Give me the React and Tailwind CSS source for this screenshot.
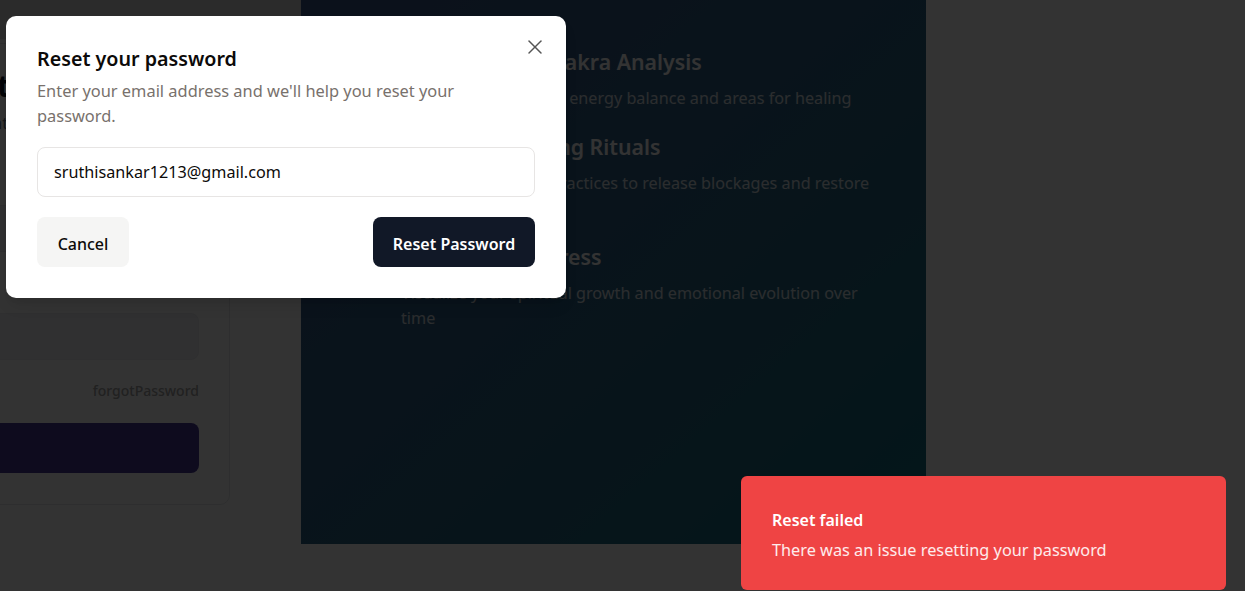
import React from "react";
import { X } from "lucide-react";

const features = [
  {
    lead: "Customized Ch",
    leadClass: "tracking-[0.7px]",
    rest: "akra Analysis",
    desc: "Discover your current energy balance and areas for healing",
  },
  {
    lead: "Personal Heali",
    leadClass: "tracking-[0.5px]",
    rest: "ng Rituals",
    desc: "Learn personalized practices to release blockages and restore balance",
  },
  {
    lead: "Track Your Prog",
    leadClass: "tracking-[-0.3px]",
    rest: "ress",
    desc: "Visualize your spiritual growth and emotional evolution over time",
  },
];

export default function App() {
  return (
    <div className="relative w-full h-[591px] overflow-hidden bg-white font-['Noto_Sans',sans-serif]">
      {/* underlying page */}
      <div className="flex h-[544px]">
        {/* left login column */}
        <div className="w-[301px] shrink-0 overflow-hidden bg-white flex flex-col">
          <div className="h-[40px] shrink-0 bg-[#d8d8d8] border-b border-[#f0f0f0]" />
          <div className="ml-[-554px] w-[784px] mt-[3px] rounded-[10px] border border-[#e5e7eb] bg-white px-[30px] pt-[24px] pb-[31px] flex flex-col">
            <h1 className="text-center text-[30px] leading-[36px] font-bold text-[#111827]">
              Sign in to your account
            </h1>
            <p className="text-center text-[16px] leading-[24px] mt-[7px] text-[#6b7280]">
              Enter your credentials to access your account
            </p>
            <div className="mt-[70px] h-[47px] rounded-[8px] bg-[#eef0f5] border border-[#e5e7eb]" />
            <div className="mt-[61px] h-[47px] rounded-[8px] bg-[#eef0f5] border border-[#e8eaef]" />
            <div className="mt-[21px] flex justify-end">
              <span className="text-[14px] leading-[20px] font-medium text-[#a3a3a3]">forgotPassword</span>
            </div>
            <div className="mt-[22px] h-[50px] rounded-[8px] bg-[#463796]" />
          </div>
        </div>

        {/* middle feature panel */}
        <div className="w-[625px] shrink-0 bg-gradient-to-br from-[#3a5589] to-[#0d6f80] pl-[100px] pt-[48px]">
          <div className="w-[480px] flex flex-col gap-[22px]">
            {features.map((f) => (
              <div key={f.rest}>
                <h3 className="text-[21.3px] leading-[28px] font-semibold text-white">
                  <span className={f.leadClass}>{f.lead}</span>
                  {f.rest}
                </h3>
                <p className="mt-[10px] text-[16.2px] leading-[25px] text-white/80">{f.desc}</p>
              </div>
            ))}
          </div>
        </div>

        {/* right area */}
        <div className="flex-1 bg-white" />
      </div>

      {/* overlay */}
      <div className="absolute inset-0 bg-black/80" />

      {/* dialog */}
      <div className="absolute left-[6px] top-[16px] w-[560px] rounded-[10px] bg-white px-[31px] pt-[29px] pb-[31px] shadow-lg">
        <h2 className="text-[19.7px] leading-[28px] font-semibold text-[#0c0a09]">Reset your password</h2>
        <p className="mt-[5px] text-[16.4px] leading-[25px] text-[#78716c]">
          Enter your email address and we'll help you reset your
          <br />
          password.
        </p>
        <div className="mt-[19px] h-[50px] rounded-[8px] border border-[#e7e5e4] bg-white flex items-center px-[16px] pt-[1px]">
          <span className="text-[16.2px] text-[#0c0a09]">sruthisankar1213@gmail.com</span>
        </div>
        <div className="mt-[20px] flex justify-between">
          <button className="w-[92px] h-[50px] pt-[3px] rounded-[8px] bg-[#f5f5f4] text-[16px] font-medium text-[#0c0a09]">
            Cancel
          </button>
          <button className="w-[162px] h-[50px] pt-[3px] rounded-[8px] bg-[#111827] text-[16px] font-semibold text-white">
            Reset Password
          </button>
        </div>
        <button className="absolute right-[19px] top-[19px] text-[#555555]">
          <X size={24} strokeWidth={1.5} />
        </button>
      </div>

      {/* toast */}
      <div className="absolute right-[19px] bottom-[1px] w-[485px] h-[114px] rounded-[6px] bg-[#ef4444] flex items-center px-[31px]">
        <div className="flex flex-col gap-[6px] mt-[4px]">
          <div className="text-[16px] leading-[24px] font-semibold text-white">Reset failed</div>
          <div className="text-[16.3px] leading-[24px] text-white/90">There was an issue resetting your password</div>
        </div>
      </div>
    </div>
  );
}
